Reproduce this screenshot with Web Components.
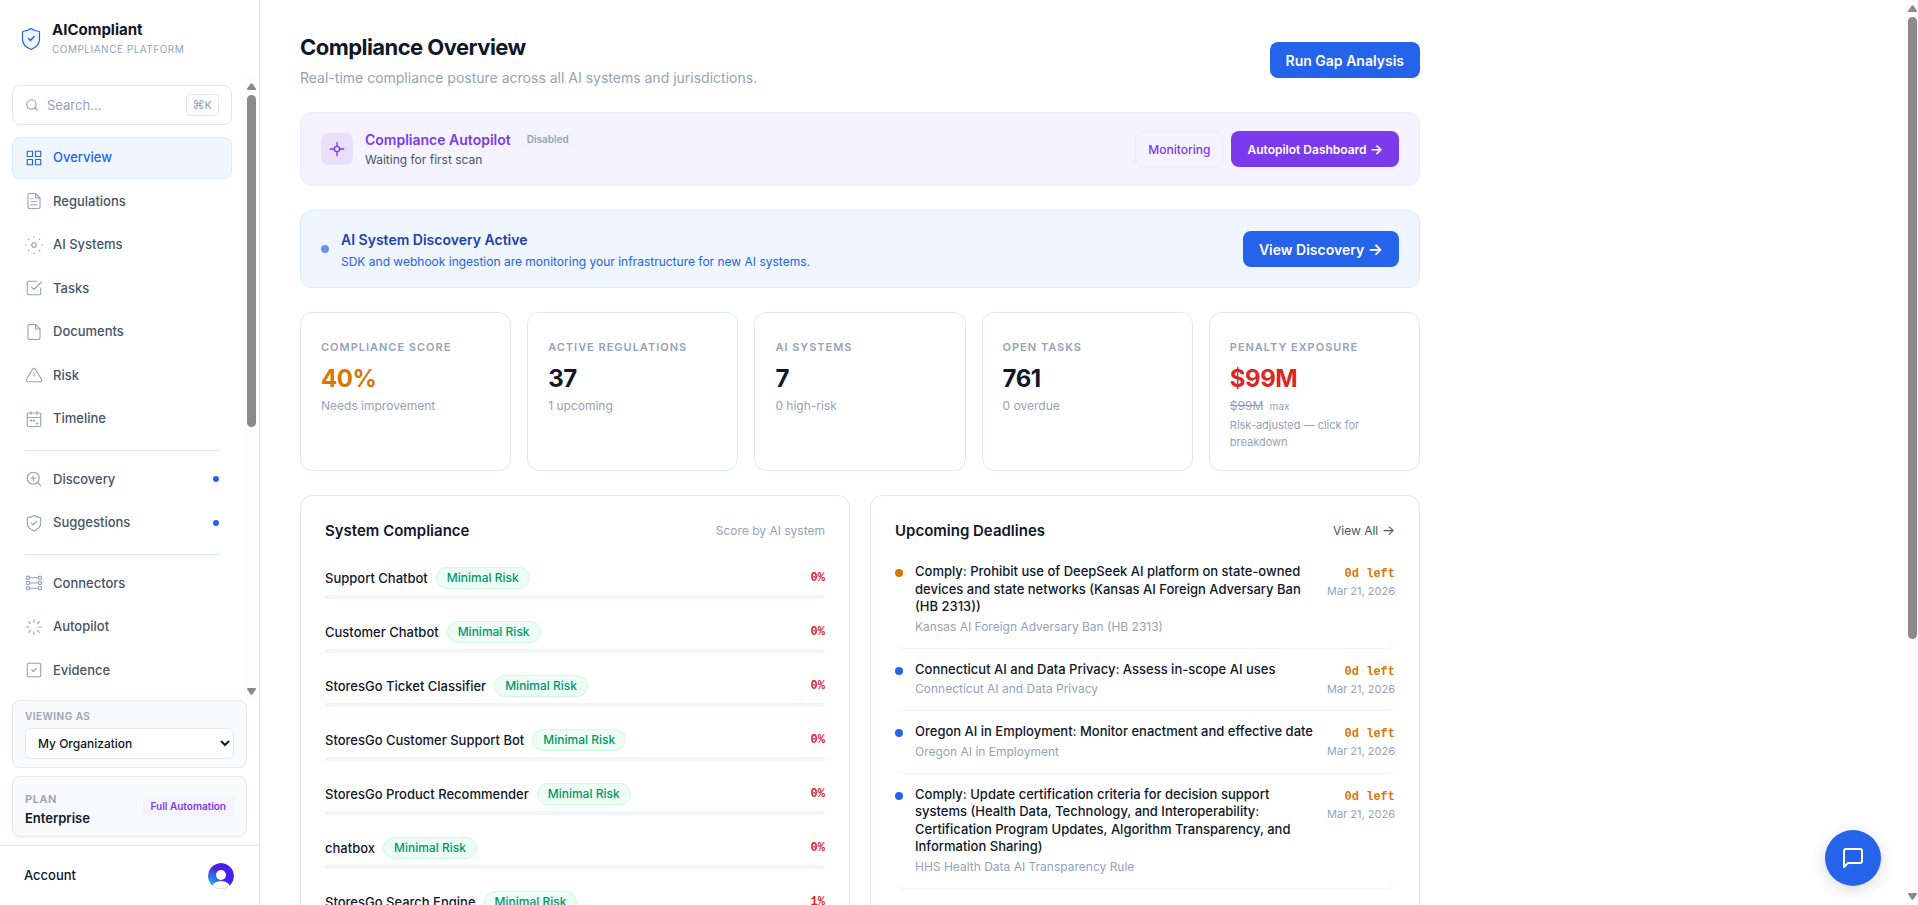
<!DOCTYPE html>
<html lang="en">
<head>
<meta charset="utf-8">
<title>AICompliant – Compliance Overview</title>
<style>
  html, body { margin: 0; height: 100%; overflow: hidden; }
  body { font-family: Inter, "Noto Sans", sans-serif; background: #fff; color: #0f172a; font-size: 13px; line-height: 1.5; }
</style>
</head>
<body>
<app-shell></app-shell>

<script>
const ICONS = {
  grid: '<rect x="3" y="3" width="7" height="7"/><rect x="14" y="3" width="7" height="7"/><rect x="3" y="14" width="7" height="7"/><rect x="14" y="14" width="7" height="7"/>',
  regs: '<path d="M14 2H6a2 2 0 0 0-2 2v16a2 2 0 0 0 2 2h12a2 2 0 0 0 2-2V8z"/><path d="M14 2v6h6M16 13H8M16 17H8M10 9H8"/>',
  ai: '<circle cx="12" cy="12" r="3"/><path d="M12 1v1M12 22v1M4.2 4.2l.8.8M19 19l.8.8M1 12h1M22 12h1M4.2 19.8l.8-.8M19 5l.8-.8"/>',
  tasks: '<path d="M9 11l3 3L22 4"/><path d="M21 12v7a2 2 0 0 1-2 2H5a2 2 0 0 1-2-2V5a2 2 0 0 1 2-2h11"/>',
  doc: '<path d="M14 2H6a2 2 0 0 0-2 2v16a2 2 0 0 0 2 2h12a2 2 0 0 0 2-2V8z"/><path d="M14 2v6h6"/>',
  risk: '<path d="M10.3 3.9L1.8 18a2 2 0 0 0 1.7 3h17a2 2 0 0 0 1.7-3L13.7 3.9a2 2 0 0 0-3.4 0z"/><path d="M12 9v4"/>',
  cal: '<rect x="3" y="4" width="18" height="18" rx="2"/><path d="M16 2v4M8 2v4M3 10h18M8 14h.01M12 14h.01M16 18h.01" /><path d="M7 14h2M11 14h2M15 18h2M8 13v2M12 13v2M16 17v2"/>',
  zoom: '<circle cx="11" cy="11" r="8"/><path d="M21 21l-4.3-4.3M11 8v6M8 11h6"/>',
  shield: '<path d="M12 2c3 2 6 3 9 3v7c0 5-4 8.500-9 10.500C7 20.500 3 17 3 12V5c3 0 6-1 9-3z"/><path d="M8.500 12l2.500 2.500 4.500-4.500"/>',
  conn: '<circle cx="4" cy="5" r="2.200"/><circle cx="4" cy="12" r="2.200"/><circle cx="4" cy="19" r="2.200"/><circle cx="20" cy="5" r="2.200"/><circle cx="20" cy="12" r="2.200"/><circle cx="20" cy="19" r="2.200"/><path d="M6 5h12M6 12h12M6 19h12"/>',
  spin: '<path d="M12 2v3.500M12 18.500V22M4.900 4.900l2.500 2.500M16.600 16.600l2.500 2.500M2 12h3.500M18.500 12H22M4.900 19.100l2.500-2.500M16.600 7.400l2.500-2.500"/>',
  evid: '<rect x="3" y="3" width="18" height="18" rx="2"/><path d="M9 12l2 2 4-4"/>',
  search: '<circle cx="11" cy="11" r="8"/><path d="M21 21l-4.300-4.300"/>',
  target: '<circle cx="12" cy="12" r="4"/><path d="M12 2v5M12 17v5M2 12h5M17 12h5"/>',
  chat: '<path d="M21 15a2 2 0 0 1-2 2H7l-4 4V5a2 2 0 0 1 2-2h14a2 2 0 0 1 2 2z"/>'
};

/* Defines an element whose open shadow root holds the given styles and markup. */
function define(name, render) {
  customElements.define(name, class extends HTMLElement {
    connectedCallback() {
      if (this.shadowRoot) return;
      this.attachShadow({ mode: 'open' }).innerHTML = render(this);
    }
  });
}
const attr = (el, name) => el.getAttribute(name) || '';

define('ui-icon', el => `
  <style>
    :host { display: block; flex: none; width: var(--icon, 18px); height: var(--icon, 18px); }
    svg { display: block; width: 100%; height: 100%; }
  </style>
  <svg viewBox="0 0 24 24" fill="none" stroke="currentColor" stroke-width="${attr(el, 'weight') || 1.5}" stroke-linecap="round" stroke-linejoin="round" aria-hidden="true">${ICONS[attr(el, 'name')]}</svg>`);

define('scroll-rail', () => `
  <style>
    :host { display: grid; grid-template-rows: var(--cap, 18px) 1fr var(--cap, 18px); justify-items: center; background: #fcfcfc; box-sizing: border-box; width: 15px; }
    svg { width: 9px; height: 7px; align-self: center; fill: #8b8b8b; }
    i { display: block; width: 9px; height: var(--thumb); border-radius: 5px; background: #8b8b8b; }
  </style>
  <svg viewBox="0 0 9 7"><path d="M3.500 .8q1-1.200 2 0L8.800 5.500Q9.200 7 8 7H1Q-.2 7 .2 5.500z"/></svg>
  <i></i>
  <svg viewBox="0 0 9 7"><path d="M3.500 6.200q1 1.200 2 0L8.800 1.500Q9.200 0 8 0H1Q-.2 0 .2 1.500z"/></svg>`);

define('nav-item', el => `
  <style>
    :host { display: block; margin-bottom: 2px; }
    a { display: flex; align-items: center; gap: 10px; padding: 10px 12px; border: 1px solid transparent; border-radius: 8px;
        color: #475569; font-size: 13px; font-weight: 500; text-decoration: none; }
    ui-icon { color: #94a3b8; }
    :host([active]) a { background: #eff6ff; border-color: #dbeafe; color: #2563eb; }
    :host([active]) ui-icon { color: #2563eb; }
    span { flex: 1; }
    i { width: 6px; height: 6px; border-radius: 50%; background: #2563eb; }
  </style>
  <a href="#"><ui-icon name="${attr(el, 'icon')}"></ui-icon><span><slot></slot></span>${el.hasAttribute('dot') ? '<i></i>' : ''}</a>`);

define('side-bar', () => `
  <style>
    :host { display: flex; flex-direction: column; box-sizing: border-box; width: 260px; flex: none; height: 100vh; border-right: 1px solid #e2e8f0; }
    .brand { display: flex; align-items: center; gap: 10px; padding: 20px; height: 37px; }
    .brand svg { width: 22px; height: 24px; flex: none; }
    .brand b { display: block; font-size: 15px; line-height: 20px; font-weight: 700; }
    .brand small { display: block; font-size: 10px; line-height: 18px; letter-spacing: .05em; color: #94a3b8; }
    .scroll { display: flex; flex: 1; min-height: 0; }
    nav { display: flex; flex-direction: column; flex: 1; min-width: 0; overflow: hidden; padding: 8px 12px 0; }
    nav > * { flex: none; }
    .search { display: flex; align-items: center; gap: 8px; width: 100%; height: 40px; padding: 0 12px; margin: 0 0 12px; box-sizing: border-box;
              border: 1px solid #e2e8f0; border-radius: 8px; background: #fff; color: #94a3b8; font: 13px Inter, sans-serif; text-align: left; --icon: 14px; }
    .search span { flex: 1; }
    kbd { display: flex; font: 11px/20px Inter, sans-serif; padding: 0 6px; border: 1px solid #e2e8f0; border-radius: 4px; }
    kbd b { font: 12px/20px "DejaVu Sans", sans-serif; }
    hr { border: 0; height: 1px; background: #e2e8f0; margin: 8px 12px; }
    scroll-rail { --thumb: 332px; }
    .box { margin: 0 12px 8px; padding: 8px 12px; border: 1px solid #e2e8f0; border-radius: 8px; background: #f8fafc; }
    .cap { display: block; color: #94a3b8; font-weight: 600; letter-spacing: .05em; font-size: 10px; line-height: 15px; margin-bottom: 4px; }
    select { display: block; width: 100%; height: 31px; padding: 0 8px; border: 1px solid #e2e8f0; border-radius: 6px; background: #fff; color: #0f172a; font: 500 12px Inter, sans-serif; }
    .plan { display: flex; justify-content: space-between; align-items: center; padding: 9px 12px; }
    .plan div { padding-top: 2px; }
    .plan .cap { font-size: 11px; line-height: 22px; margin: 0; }
    .plan b { display: block; font-size: 13px; line-height: 17px; font-weight: 600; }
    .tag { font-size: 10px; line-height: 19px; font-weight: 600; color: #7c3aed; background: #f5f3ff; border-radius: 4px; padding: 0 8px; }
    .account { display: flex; justify-content: space-between; align-items: center; padding: 0 25px 0 24px; height: 59px; border-top: 1px solid #e2e8f0; font-weight: 500; color: #0f172a; }
    .account button { border: 0; padding: 0; background: none; width: 26px; height: 26px; }
  </style>
  <div class="brand">
    <svg viewBox="0 0 22 24" fill="none" stroke="#2563eb" stroke-linecap="round" stroke-linejoin="round"><path d="M11 1.500c2.500 2 5.500 3 8.500 3V12c0 5-3.500 8.500-8.500 10.500C6 20.500 2.500 17 2.500 12V4.500c3 0 6-1 8.500-3z" fill="#eff6ff" stroke-width="1.200"/><path d="M8.500 11.500l2 2 3.500-4" stroke-width="1.500"/></svg>
    <div><b>AICompliant</b><small>COMPLIANCE PLATFORM</small></div>
  </div>
  <div class="scroll">
    <nav>
      <button class="search"><ui-icon name="search" weight="2"></ui-icon><span>Search...</span><kbd><b>⌘</b>K</kbd></button>
      <nav-item icon="grid" active>Overview</nav-item>
      <nav-item icon="regs">Regulations</nav-item>
      <nav-item icon="ai">AI Systems</nav-item>
      <nav-item icon="tasks">Tasks</nav-item>
      <nav-item icon="doc">Documents</nav-item>
      <nav-item icon="risk">Risk</nav-item>
      <nav-item icon="cal">Timeline</nav-item>
      <hr>
      <nav-item icon="zoom" dot>Discovery</nav-item>
      <nav-item icon="shield" dot>Suggestions</nav-item>
      <hr>
      <nav-item icon="conn">Connectors</nav-item>
      <nav-item icon="spin">Autopilot</nav-item>
      <nav-item icon="evid">Evidence</nav-item>
    </nav>
    <scroll-rail></scroll-rail>
  </div>
  <div class="box">
    <label class="cap" for="org">VIEWING AS</label>
    <select id="org"><option>My Organization</option></select>
  </div>
  <div class="box plan">
    <div><span class="cap">PLAN</span><b>Enterprise</b></div>
    <span class="tag">Full Automation</span>
  </div>
  <div class="account"><span>Account</span>
    <button aria-label="Account menu"><svg viewBox="0 0 26 26" width="26" height="26"><defs><radialGradient id="g" cx=".1" cy=".75" r=".6"><stop offset="0" stop-color="#22a7f0"/><stop offset="1" stop-color="#4a1fe8"/></radialGradient><clipPath id="c"><circle cx="13" cy="13" r="13"/></clipPath></defs><g clip-path="url(#c)"><circle cx="13" cy="13" r="13" fill="url(#g)"/><circle cx="13" cy="12" r="5" fill="#fff"/><ellipse cx="13" cy="24" rx="9" ry="6" fill="#fff"/></g><path d="M5 23a13 13 0 0 0 16 0" fill="none" stroke="#e2e2ea"/></svg></button>
  </div>`);

define('ui-button', el => `
  <style>
    :host { display: block; flex: none; }
    button { display: block; box-sizing: border-box; height: 36px; padding: 0 16px; border: 0; border-radius: 8px; background: #2563eb; color: #fff; font: 600 14px Inter, sans-serif; white-space: nowrap; }
    :host([kind=violet]) button { background: #7c3aed; font-size: 12px; }
    :host([kind=ghost]) button { background: none; border: 1px solid #ede9fe; color: #7c3aed; font-size: 12px; font-weight: 500; padding: 0 12px; }
  </style>
  <button><slot></slot></button>`);

define('notice-bar', () => `
  <style>
    :host { display: flex; align-items: center; gap: 12px; margin-bottom: 24px; padding: 16px 20px; border: 1px solid #ede9fe; border-radius: 12px; background: #f5f3ff; color: #7c3aed; }
    :host([tone=blue]) { background: #eff6ff; border-color: #dbeafe; color: #2563eb; padding: 17px 20px; }
    .text { flex: 1; }
    :host([tone=blue]) .text { padding-top: 2px; }
    .actions { display: flex; gap: 8px; }
  </style>
  <slot name="lead"></slot>
  <div class="text"><slot></slot></div>
  <div class="actions"><slot name="action"></slot></div>`);

define('stat-card', el => `
  <style>
    :host { display: block; padding: 24px 20px 19px; border: 1px solid #e2e8f0; border-radius: 12px; color: #94a3b8; font-size: 12px; line-height: 18px; }
    .label { font-size: 11px; line-height: 20px; font-weight: 600; letter-spacing: .09em; white-space: nowrap; }
    .value { margin-top: 4px; font-size: 24px; line-height: 36px; font-weight: 700; letter-spacing: -.02em; color: var(--value, #0f172a); }
  </style>
  <div class="label">${attr(el, 'label')}</div>
  <div class="value">${attr(el, 'value')}</div>
  <slot></slot>`);

define('ui-panel', el => `
  <style>
    :host { display: block; padding: 24px; border: 1px solid #e2e8f0; border-radius: 12px; }
    header { display: flex; justify-content: space-between; align-items: center; margin-bottom: 9px; height: 22px; font-size: 12px; line-height: 22px; color: #94a3b8; }
    h2 { margin: 0; font-size: 15px; font-weight: 600; color: #0f172a; }
  </style>
  <header><h2>${attr(el, 'heading')}</h2><slot name="aside"></slot></header>
  <slot></slot>`);

define('system-row', el => `
  <style>
    :host { display: block; margin-bottom: 22px; }
    .line { display: flex; align-items: center; gap: 8px; margin-bottom: 6px; line-height: 20px; }
    .name { font-size: 13px; font-weight: 500; }
    .risk { font-size: 12px; font-weight: 500; color: #059669; background: #ecfdf5; border: 1px solid #d1fae5; border-radius: 11px; padding: 0 10px; }
    .score { margin-left: auto; font: 600 12px/22px "Liberation Mono", monospace; color: #dc2626; }
    .track { height: 4px; border-radius: 2px; background: #f1f5f9; }
  </style>
  <div class="line"><span class="name"><slot></slot></span><span class="risk">Minimal Risk</span><span class="score">${attr(el, 'score')}</span></div>
  <div class="track"></div>`);

define('deadline-item', el => `
  <style>
    :host { display: flex; align-items: flex-start; gap: 12px; padding: 12px 0; border-bottom: 1px solid #f1f5f9; border-radius: 8px; }
    i { flex: none; width: 8px; height: 8px; margin-top: 6px; border-radius: 50%; background: var(--dot, #2563eb); }
    .text { flex: 1; font-size: 13px; line-height: 1.35; font-weight: 500; }
    .text small { display: block; margin-top: 2px; font-size: 12px; line-height: 18px; font-weight: 400; color: #94a3b8; }
    .due { text-align: right; font-size: 11px; line-height: 12px; color: #94a3b8; white-space: nowrap; }
    .due b { display: block; font: 600 12px/22px "Liberation Mono", monospace; color: #d97706; }
  </style>
  <i></i>
  <div class="text"><slot></slot><small>${attr(el, 'source')}</small></div>
  <div class="due"><b>0d left</b>Mar 21, 2026</div>`);

define('overview-page', () => `
  <style>
    :host { display: block; max-width: 1120px; padding: 32px 40px; }
    .head { display: flex; justify-content: space-between; align-items: center; margin-bottom: 24px; }
    h1 { margin: 0 0 4px; font-size: 22px; line-height: 31px; font-weight: 700; letter-spacing: -.025em; }
    .head p { margin: 0; font-size: 14px; line-height: 21px; color: #94a3b8; }
    .tile { display: grid; place-items: center; width: 32px; height: 32px; border-radius: 8px; background: #e9dffd; }
    .dot { width: 8px; height: 8px; border-radius: 50%; background: #6593f2; }
    h3 { display: flex; align-items: center; gap: 8px; margin: 0; font-size: 14px; line-height: 21px; font-weight: 600; }
    .off { font-size: 10px; line-height: 19px; color: #94a3b8; background: #f1f5f9; border-radius: 10px; padding: 0 8px; }
    .note { margin: 0; font-size: 12px; line-height: 19px; color: #475569; }
    .blue h3 { color: #1e40af; line-height: 20px; }
    .blue .note { margin-top: 4px; line-height: 16px; color: #2563eb; }
    .stats { display: grid; grid-template-columns: repeat(5, minmax(0, 1fr)); gap: 16px; margin-bottom: 24px; }
    .panels { display: grid; grid-template-columns: 1fr 1fr; gap: 20px; }
    .systems { padding-top: 16px; }
    .max { font-size: 10px; margin-left: 3px; }
    .hint { margin-top: 2px; font-size: 11px; line-height: 17px; }
    .amber { --value: #d97706; }
    .red { --value: #dc2626; }
    a { color: #475569; text-decoration: none; }
    .arrow { font-size: 14px; line-height: 1; }
    .arrow.large { font-size: 16px; }
  </style>
  <div class="head">
    <div><h1>Compliance Overview</h1><p>Real-time compliance posture across all AI systems and jurisdictions.</p></div>
    <ui-button>Run Gap Analysis</ui-button>
  </div>
  <notice-bar>
    <span slot="lead" class="tile"><ui-icon name="target" weight="2" style="--icon: 16px"></ui-icon></span>
    <h3>Compliance Autopilot <span class="off">Disabled</span></h3>
    <p class="note">Waiting for first scan</p>
    <ui-button slot="action" kind="ghost">Monitoring</ui-button>
    <ui-button slot="action" kind="violet">Autopilot Dashboard <span class="arrow">→</span></ui-button>
  </notice-bar>
  <notice-bar tone="blue" class="blue">
    <span slot="lead" class="dot"></span>
    <h3>AI System Discovery Active</h3>
    <p class="note">SDK and webhook ingestion are monitoring your infrastructure for new AI systems.</p>
    <ui-button slot="action">View Discovery <span class="arrow large">→</span></ui-button>
  </notice-bar>
  <div class="stats">
    <stat-card class="amber" label="COMPLIANCE SCORE" value="40%">Needs improvement</stat-card>
    <stat-card label="ACTIVE REGULATIONS" value="37">1 upcoming</stat-card>
    <stat-card label="AI SYSTEMS" value="7">0 high-risk</stat-card>
    <stat-card label="OPEN TASKS" value="761">0 overdue</stat-card>
    <stat-card class="red" label="PENALTY EXPOSURE" value="$99M"><s>$99M</s> <span class="max">max</span><div class="hint">Risk-adjusted — click for breakdown</div></stat-card>
  </div>
  <div class="panels">
    <ui-panel heading="System Compliance">
      <span slot="aside">Score by AI system</span>
      <div class="systems">
        <system-row score="0%">Support Chatbot</system-row>
        <system-row score="0%">Customer Chatbot</system-row>
        <system-row score="0%">StoresGo Ticket Classifier</system-row>
        <system-row score="0%">StoresGo Customer Support Bot</system-row>
        <system-row score="0%">StoresGo Product Recommender</system-row>
        <system-row score="0%">chatbox</system-row>
        <system-row score="1%">StoresGo Search Engine</system-row>
      </div>
    </ui-panel>
    <ui-panel heading="Upcoming Deadlines">
      <a slot="aside" href="#">View All <span class="arrow">→</span></a>
      <deadline-item style="--dot: #d97706" source="Kansas AI Foreign Adversary Ban (HB 2313)">Comply: Prohibit use of DeepSeek AI platform on state-owned devices and state networks (Kansas AI Foreign Adversary Ban (HB 2313))</deadline-item>
      <deadline-item source="Connecticut AI and Data Privacy">Connecticut AI and Data Privacy: Assess in-scope AI uses</deadline-item>
      <deadline-item source="Oregon AI in Employment">Oregon AI in Employment: Monitor enactment and effective date</deadline-item>
      <deadline-item source="HHS Health Data AI Transparency Rule">Comply: Update certification criteria for decision support systems (Health Data, Technology, and Interoperability: Certification Program Updates, Algorithm Transparency, and Information Sharing)</deadline-item>
    </ui-panel>
  </div>`);

define('chat-launcher', () => `
  <style>
    :host { position: fixed; right: 37px; bottom: 19px; }
    button { display: grid; place-items: center; width: 56px; height: 56px; border: 0; padding: 0; border-radius: 50%; background: #2563eb; color: #fff; box-shadow: 0 4px 16px rgba(0,0,0,.15); --icon: 24px; }
  </style>
  <button aria-label="Open chat"><ui-icon name="chat" weight="2"></ui-icon></button>`);

define('app-shell', () => `
  <style>
    :host { display: flex; height: 100vh; overflow: hidden; }
    main { flex: 1; min-width: 0; overflow: hidden; }
    scroll-rail { flex: none; width: 13px; padding-left: 2px; height: 100vh; --cap: 17px; --thumb: 622px; }
  </style>
  <side-bar></side-bar>
  <main><overview-page></overview-page></main>
  <scroll-rail></scroll-rail>
  <chat-launcher></chat-launcher>`);
</script>
</body>
</html>
